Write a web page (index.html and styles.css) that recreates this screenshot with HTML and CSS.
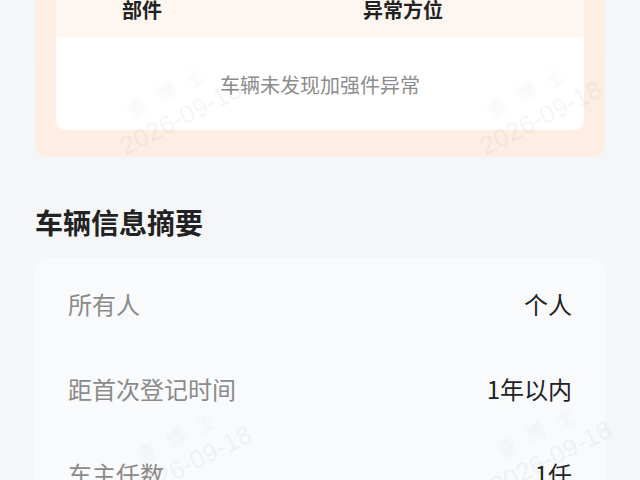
FILE: index.html
```html
<!DOCTYPE html>
<html lang="zh-CN">
<head>
<meta charset="utf-8">
<title>车辆信息</title>
<link rel="stylesheet" href="styles.css">
</head>
<body>
<div class="page">
  <section class="alert-card">
    <div class="table">
      <div class="thead">
        <span class="col col-part">部件</span>
        <span class="col col-pos">异常方位</span>
      </div>
      <div class="tbody">车辆未发现加强件异常</div>
    </div>
  </section>

  <h2 class="section-title">车辆信息摘要</h2>

  <section class="info-card">
    <div class="row"><span class="label">所有人</span><span class="value">个人</span></div>
    <div class="row"><span class="label">距首次登记时间</span><span class="value">1年以内</span></div>
    <div class="row"><span class="label">车主任数</span><span class="value">1任</span></div>
  </section>

  <div class="watermarks" aria-hidden="true">
    <div class="wm wm-1"><span class="wm-top">查 博 士</span><span class="wm-date">2026-09-18</span></div>
    <div class="wm wm-2"><span class="wm-top">查 博 士</span><span class="wm-date">2026-09-18</span></div>
    <div class="wm wm-3"><span class="wm-top">查 博 士</span><span class="wm-date">2026-09-18</span></div>
    <div class="wm wm-4"><span class="wm-top">查 博 士</span><span class="wm-date">2026-09-18</span></div>
  </div>
</div>
</body>
</html>
```

FILE: styles.css
```css
html, body {
  margin: 0;
  padding: 0;
  background: #f5f6f8;
}

.page {
  position: relative;
  display: flow-root;
  width: 640px;
  font-family: "Noto Sans CJK SC", "Noto Sans", sans-serif;
  color: #222;
}

.alert-card {
  margin: -40px 35px 0;
  padding: 20px 21px 27px;
  background: linear-gradient(180deg, #fdf0e6 0%, #fdede2 100%);
  border-radius: 14px;
}

.table {
  background: #fff;
  border-radius: 10px;
  overflow: hidden;
}

.thead {
  display: grid;
  grid-template-columns: 241px 1fr;
  padding-left: 66px;
  height: 58px;
  align-items: center;
  background: #fdf6f1;
  font-size: 20px;
  font-weight: 700;
  color: #222;
}

.tbody {
  height: 92px;
  display: flex;
  align-items: center;
  justify-content: center;
  font-size: 20px;
  color: #8c8c8c;
}

.section-title {
  margin: 45px 35px 16px;
  font-size: 28px;
  line-height: 40px;
  font-weight: 700;
  color: #222;
}

.info-card {
  margin: 0 35px;
  padding: 3px 33px 0;
  background: #f9fafb;
  border-radius: 14px;
  height: 300px;
}

.row {
  display: flex;
  justify-content: space-between;
  align-items: center;
  height: 85px;
  font-size: 24px;
}

.label {
  color: #8a8a8a;
}

.value {
  color: #222;
}

.watermarks {
  position: absolute;
  inset: 0;
  pointer-events: none;
}

.wm {
  position: absolute;
  display: flex;
  flex-direction: column;
  align-items: center;
  transform: rotate(-27deg);
  color: rgba(0, 0, 0, 0.045);
  font-family: "Liberation Sans", sans-serif;
}

.wm-top {
  font-family: "Noto Sans CJK SC", sans-serif;
  font-size: 20px;
  letter-spacing: 4px;
  filter: blur(1.5px);
}

.wm-date {
  font-size: 26px;
  filter: blur(0.7px);
}

.wm-1 { left: 108px; top: 75px; }
.wm-2 { left: 468px; top: 75px; }
.wm-3 { left: 118px; top: 420px; }
.wm-4 { left: 478px; top: 415px; }
```
